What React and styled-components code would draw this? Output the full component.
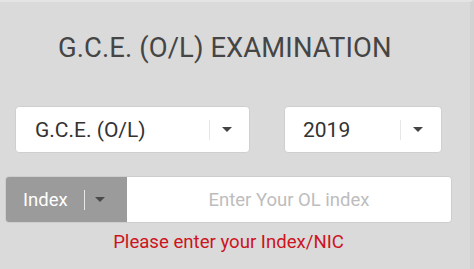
import React from "react";
import styled, { createGlobalStyle } from "styled-components";

const GlobalStyle = createGlobalStyle`
  html, body {
    margin: 0;
    padding: 0;
    background: #dadada;
  }
  body {
    font-family: Roboto, "Liberation Sans", sans-serif;
  }
`;

const Page = styled.div`
  width: 474px;
  height: 269px;
  box-sizing: border-box;
  background: #dadada;
  border-top: 2px solid #e4e4e4;
  border-right: 4px solid #d2d2d2;
  overflow: hidden;
`;

const Title = styled.h1`
  margin: 0;
  padding: 30px 0 0 58px;
  font-size: 27.4px;
  font-weight: 400;
  line-height: 32px;
  color: #454545;
  letter-spacing: 0.1px;
`;

const SelectRow = styled.div`
  display: flex;
  gap: 34px;
  margin: 42px 0 0 15px;
`;

const Select = styled.div`
  width: ${(p) => p.$width}px;
  height: 47px;
  box-sizing: border-box;
  display: flex;
  align-items: center;
  background: #fff;
  border: 1px solid #cfcfcf;
  border-radius: 4px;
  padding-left: ${(p) => p.$pad}px;
`;

const SelectText = styled.span`
  flex: 1;
  font-size: 21px;
  color: #333;
`;

const Divider = styled.span`
  width: 1px;
  height: 20px;
  background: ${(p) => p.$color || "#e6e6e6"};
`;

const Caret = styled.span`
  width: 0;
  height: 0;
  border-left: 5px solid transparent;
  border-right: 5px solid transparent;
  border-top: 5px solid ${(p) => p.$color || "#444"};
  margin: 0 ${(p) => p.$right}px 0 ${(p) => p.$left}px;
`;

const IndexRow = styled.div`
  display: flex;
  width: 447px;
  height: 47px;
  margin: 23px 0 0 5px;
  border-radius: 4px;
  overflow: hidden;
  border: 1px solid #cdcdcd;
  box-sizing: border-box;
`;

const Prefix = styled.div`
  width: 121px;
  display: flex;
  align-items: center;
  background: #9b9b9b;
  padding-left: 17px;
  box-sizing: border-box;
`;

const PrefixText = styled.span`
  font-size: 18.5px;
  color: #fff;
  margin-right: 16px;
`;

const Input = styled.input`
  flex: 1;
  border: none;
  outline: none;
  background: #fff;
  text-align: center;
  font-family: Roboto, "Liberation Sans", sans-serif;
  font-size: 18.5px;
  color: #333;
  padding: 0;
  &::placeholder {
    color: #bdbdbd;
  }
`;

const Error = styled.div`
  width: 447px;
  margin: 6px 0 0 5px;
  text-align: center;
  font-size: 18.6px;
  line-height: 26px;
  color: #cc1420;
`;

export default function App() {
  return (
    <>
      <GlobalStyle />
      <Page>
        <Title>G.C.E. (O/L) EXAMINATION</Title>
        <SelectRow>
          <Select $width={235} $pad={19}>
            <SelectText>G.C.E. (O/L)</SelectText>
            <Divider />
            <Caret $left={12} $right={17} />
          </Select>
          <Select $width={158} $pad={18}>
            <SelectText>2019</SelectText>
            <Divider />
            <Caret $left={12} $right={18} />
          </Select>
        </SelectRow>
        <IndexRow>
          <Prefix>
            <PrefixText>Index</PrefixText>
            <Divider $color="#e8e8e8" />
            <Caret $left={10} $right={0} $color="#4a4a4a" />
          </Prefix>
          <Input placeholder="Enter Your OL index" />
        </IndexRow>
        <Error>Please enter your Index/NIC</Error>
      </Page>
    </>
  );
}
